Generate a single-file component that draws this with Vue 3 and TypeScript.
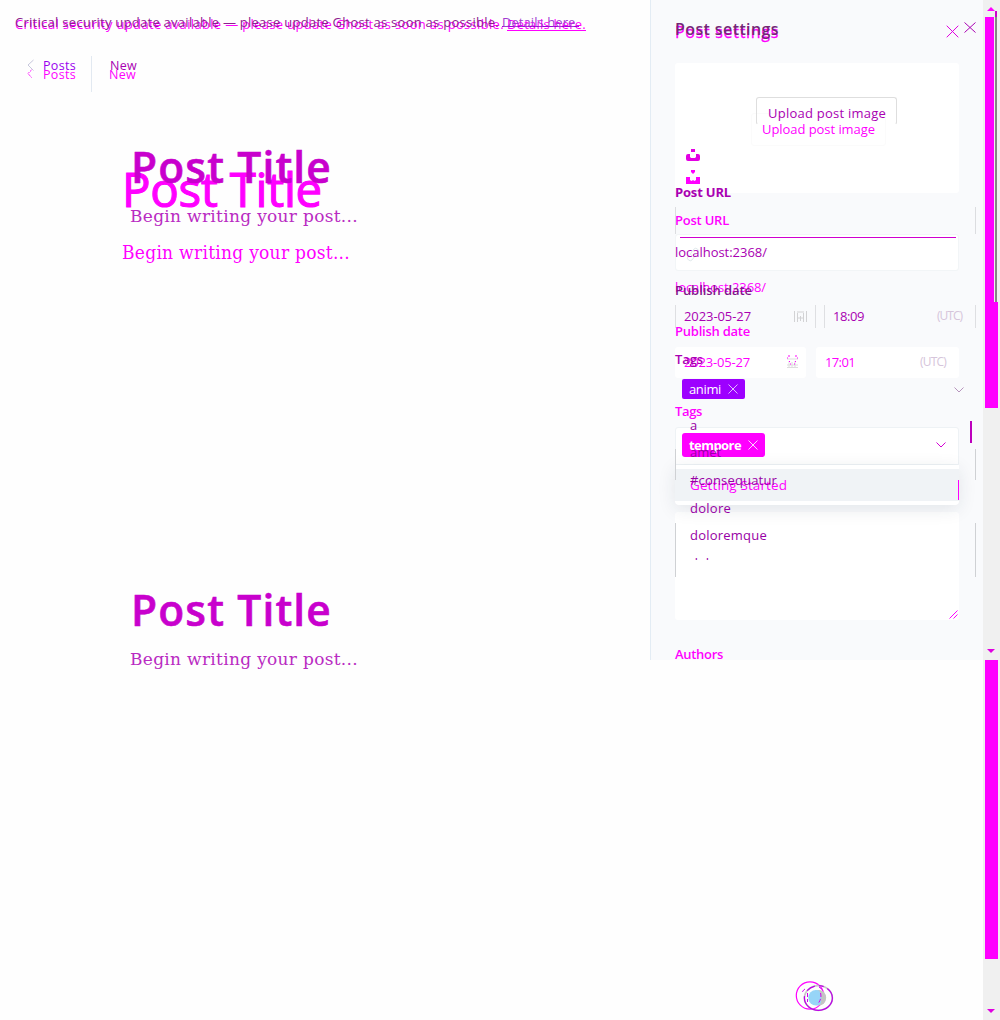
<script setup lang="ts">
import type { Directive } from 'vue'

// Spreads the letters of a line so that it spans the given width.
const vFit: Directive<HTMLElement, number> = {
  mounted(el, { value }) {
    const natural = el.getBoundingClientRect().width
    const count = (el.textContent ?? '').trim().length
    el.style.letterSpacing = `${((value - natural) / count).toFixed(3)}px`
  },
}

interface Option {
  name: string
  width: number
  gap: number
}
const options: Option[] = [
  { name: 'a', width: 8, gap: 0 },
  { name: 'amet', width: 31, gap: 7 },
  { name: '#consequatur', width: 87, gap: 8 },
  { name: 'dolore', width: 41, gap: 8 },
  { name: 'doloremque', width: 77, gap: 7 },
]
</script>

<template>
  <div class="page">
    <!-- Editor, current state -->
    <section class="editor now">
      <p class="notice"><span v-fit="489">Critical security update available — please update Ghost as soon as possible.</span><a v-fit="79">Details here.</a></p>
      <nav>
        <svg class="back" width="6" height="10" viewBox="0 0 6 10"><path d="M4.5 1 1 4.5 4.5 8.5" stroke-dasharray="2 1" /></svg>
        <span class="posts" v-fit="33">Posts</span>
        <span v-fit="27">New</span>
      </nav>
      <h1><span v-fit="200">Post Title</span></h1>
      <p class="body"><span v-fit="228">Begin writing your post...</span></p>
    </section>

    <!-- Editor, previous state -->
    <section class="editor old">
      <p class="notice"><span v-fit="484">Critical security update available — please update Ghost as soon as possible.</span><a v-fit="77">Details here.</a></p>
      <nav>
        <svg class="back" width="8" height="13" viewBox="0 0 8 13"><path d="M6.5 1 1 6 6.5 11.5" /></svg>
        <span class="posts" v-fit="33">Posts</span>
        <i class="rule"></i>
        <span v-fit="27">New</span>
      </nav>
      <h1><span v-fit="201">Post Title</span></h1>
      <p class="body"><span v-fit="228">Begin writing your post...</span></p>
      <h1 class="again"><span v-fit="201">Post Title</span></h1>
      <p class="body"><span v-fit="228">Begin writing your post...</span></p>
    </section>

    <aside>
      <!-- Settings, current state -->
      <div class="settings now">
        <header><span v-fit="104">Post settings</span>
          <svg class="close" width="13" height="13" viewBox="0 0 13 13"><path d="M.7.7l11.6 11.6M12.3.7.7 12.3" /></svg>
        </header>
        <div class="upload">
          <div class="btn"><span v-fit="113">Upload post image</span></div>
          <svg class="splash" width="14" height="14" viewBox="0 0 14 14"><path d="M5 0h4v2L7 4 5 2zM0 7h4v3l1.500 1L7 10l1.500 1L10 10V7h4v7H0z" /></svg>
        </div>
        <div class="label url"><span v-fit="54">Post URL</span></div>
        <div class="field">
          <i class="line"></i>
          <svg width="15" height="15" viewBox="0 0 15 15"><path d="M6 9 5 8q-1-1 0-2l3-4q1.500-1.500 3.500 0t.5 3.500l-2 2M8 6l1 1q1 1 0 2l-3 4q-1.500 1.500-3.500 0T2 9.500l2-2" /></svg>
        </div>
        <div class="t local"><span v-fit="91">localhost:2368/</span></div>
        <div class="label pub"><span v-fit="75">Publish date</span></div>
        <div class="dates">
          <div class="date"><span v-fit="66">2023-05-27</span>
            <svg width="13" height="14" viewBox="0 0 13 14"><path class="pale" d="M1 4h11M1 12.500h11M3 6v6M6 7v5M9 6v6M1 10h11" /><path d="M2 1h2M9 1h2M1 3h1M11 3h1M3 6l1 1M9 7l1-1M4 9h1M8 9h1" /></svg>
          </div>
          <div class="date time"><span v-fit="30">17:01</span><small v-fit="26">(UTC)</small></div>
        </div>
        <div class="label tags"><span v-fit="27">Tags</span></div>
        <div class="select">
          <div class="chip"><b v-fit="52">tempore</b><svg width="10" height="10" viewBox="0 0 10 10"><path d="M.5.5l9 9M9.500.5l-9 9" /></svg></div>
          <svg class="down" width="10" height="6" viewBox="0 0 10 6"><path d="M.5.5 5 5 9.500.5" /></svg>
        </div>
        <div class="menu"><div class="item"><span v-fit="97">Getting Started</span><i></i></div></div>
        <div class="area">
          <svg width="9" height="9" viewBox="0 0 9 9"><path d="M.5 8.500l8-8M4.500 8.500l4-4" /></svg>
        </div>
        <div class="label authors"><span v-fit="48">Authors</span></div>
      </div>

      <!-- Settings, previous state -->
      <div class="settings old">
        <header><span v-fit="104">Post settings</span>
          <svg class="close" width="12" height="11" viewBox="0 0 12 11"><path d="M.5.5l11 10M11.500.5l-11 10" /></svg>
        </header>
        <div class="btn"><span v-fit="118">Upload post image</span></div>
        <svg class="splash" width="14" height="12" viewBox="0 0 14 12"><path d="M5 0h4v3H5zM2 5h2v3l1 1h4l1-1V5h2q2 0 2 2v3q0 2-2 2H2q-2 0-2-2V7q0-2 2-2z" /></svg>
        <div class="label url"><span v-fit="56">Post URL</span></div>
        <div class="sides"></div>
        <div class="t local"><span v-fit="92">localhost:2368/</span></div>
        <div class="label pub"><span v-fit="77">Publish date</span></div>
        <div class="dates">
          <div class="date"><span v-fit="67">2023-05-27</span>
            <svg width="13" height="11" viewBox="0 0 13 11"><path d="M.5 0v11M3.500 2v9M6.500 5v5M9.500 2v9M12.500 0v11M3 1h7M3 7h7" /></svg>
          </div>
          <div class="date time"><span v-fit="31">18:09</span><small v-fit="25">(UTC)</small></div>
        </div>
        <div class="label tags"><span v-fit="28">Tags</span></div>
        <div class="select">
          <div class="chip"><span v-fit="32">animi</span><svg width="10" height="10" viewBox="0 0 10 10"><path d="M.5.5l9 9M9.500.5l-9 9" /></svg></div>
          <svg class="down" width="10" height="6" viewBox="0 0 10 6"><path d="M.5.5 5 5 9.500.5" /></svg>
        </div>
        <div class="options">
          <div v-for="o in options" :key="o.name" class="t" :style="{ marginTop: `${o.gap}px` }"><span v-fit="o.width">{{ o.name }}</span></div>
          <div class="t cut"><span>dolor</span></div>
          <i class="edge one"></i><i class="edge two"></i><i class="bar"></i>
        </div>
      </div>
    </aside>

    <div class="track">
      <i class="up"></i>
      <i class="thumb first"></i>
      <i class="thumb second"></i>
      <i class="dn mid"></i>
      <i class="thumb third"></i>
      <i class="dn end"></i>
      <i class="slim"></i>
    </div>

    <svg class="rings" width="40" height="32" viewBox="0 0 40 32" fill="none">
      <circle cx="15" cy="15.500" r="13.700" stroke="#f0f" stroke-width="1.200" />
      <circle cx="23.500" cy="17.700" r="7.700" fill="#c4c4c4" />
      <circle cx="21" cy="17.700" r="7.700" fill="#97d5f7" />
      <path d="M24 10.300a7.700 7.700 0 0 1 1 15q3-7-1-15z" fill="#c4c4c4" />
      <ellipse cx="23.400" cy="18" rx="14" ry="12.300" stroke="#c9c9c9" stroke-width="1.700" />
      <ellipse cx="23.400" cy="18" rx="14" ry="12.300" stroke="#bd00e8" stroke-width="1.200" stroke-dasharray="43 6 9 4 5 4" />
      <path d="M10 9q-2 1-3 4M12.500 13v9M25.500 13q1.500 5-2 10M24 7l4 3" stroke="#d600f0" stroke-dasharray="4 2" />
    </svg>
  </div>
</template>

<style>
body {
  margin: 0;
  background: #fff;
}
</style>

<style scoped>
.page {
  display: grid;
  grid-template-columns: 650px 333px 17px;
  width: 1000px;
  height: 1020px;
  overflow: hidden;
  position: relative;
  background: #fefefe;
  font: 13px/20px 'Open Sans', 'Noto Sans', sans-serif;
  white-space: nowrap;
}
p,
h1 {
  margin: 0;
  font-weight: 400;
}
svg {
  display: block;
  fill: none;
  stroke: currentColor;
  flex: none;
}
span,
a,
b,
small {
  display: inline-block;
}
.now {
  color: #f0f;
}
.old {
  color: #a900b2;
}

/* Editor */
.editor {
  grid-area: 1 / 1;
}
.notice {
  display: flex;
  padding: 14px 0 0 15px;
}
.now .notice a {
  margin-left: 3px;
  border-bottom: 1px solid #f0f;
  height: 16px;
}
.old .notice {
  padding-top: 12px;
  color: #8d208d;
}
.old .notice a {
  margin-left: 3px;
  height: 14px;
  line-height: 20px;
  color: #a23ad0;
  border-bottom: 1px solid #9c00d6;
}
nav {
  display: flex;
  align-items: flex-start;
  font-size: 12.500px;
  height: 40px;
}
.now nav {
  margin-top: 31px;
  padding-left: 27px;
}
.now .back {
  margin-top: 4px;
}
.now .posts {
  margin: 0 33px 0 10px;
}
.old nav {
  margin-top: 24px;
  padding-left: 27px;
}
.old .back {
  margin-top: 3px;
  color: #c7c7dc;
}
.old .posts {
  margin: 0 0 0 8px;
  color: #9a00ee;
}
.rule {
  width: 1px;
  height: 36px;
  background: #e2e9f1;
  margin: 0 18px 0 15px;
}
h1 {
  padding-left: 122px;
  line-height: 60px;
}
.now h1 {
  font-size: 47.500px;
  -webkit-text-stroke: 1.1px #f0f;
  margin-top: 54px;
}
.old h1 {
  padding-left: 131px;
  font-size: 42.500px;
  font-weight: 600;
  -webkit-text-stroke: 0.6px #c800cd;
  margin-top: 41px;
  color: #c800cd;
}
.old h1.again {
  margin-top: 352px;
}
.body {
  font: 19px/24px 'DejaVu Serif Condensed', 'DejaVu Serif', serif;
  font-stretch: condensed;
  padding-left: 122px;
}
.now .body {
  margin-top: 21px;
}
.old .body {
  padding-left: 130px;
  font: 17px/24px 'DejaVu Serif', serif;
  margin-top: 7px;
  color: #b92bc2;
}

/* Settings panel */
aside {
  grid-area: 1 / 2;
  height: 660px;
  display: grid;
  overflow: hidden;
  background: #f9fafc;
  border-left: 1px solid #e3ecf4;
}
.settings {
  grid-area: 1 / 1;
  padding-left: 24px;
  width: 284px;
  display: flex;
  flex-direction: column;
}
.settings > * {
  flex: none;
}
.settings.old {
  width: 301px;
  position: relative;
  z-index: 2;
}
header {
  display: flex;
  justify-content: space-between;
  font-size: 16px;
  margin-top: 22px;
  height: 20px;
}
.now header span {
  -webkit-text-stroke: 0.3px #f0f;
}
.now .close {
  margin-top: 3px;
}
.old header {
  margin-top: 18px;
  font-weight: 600;
  color: #742775;
}
.old header span {
  position: relative;
  top: 1px;
}
.close {
  color: #e000e0;
}
.old .close {
  margin-top: 4px;
  color: #a900b2;
}
.upload {
  height: 130px;
  margin-top: 21px;
  background: #fff;
  border-radius: 3px;
}
.now .btn {
  margin: 50px 0 0 76px;
  padding-left: 10px;
  line-height: 31px;
  box-sizing: border-box;
  border-radius: 3px;
  border: 1px solid #fbfbfb;
  width: 135px;
  height: 33px;
}
.old .btn {
  margin: 59px 0 0 81px;
  width: 141px;
  height: 28px;
  padding: 5px 0 0 11px;
  box-sizing: border-box;
  border: 1px solid #dedede;
  border-bottom-color: transparent;
  border-radius: 3px;
}
.splash {
  margin-left: 11px;
  fill: currentColor;
  stroke: none;
}
.now .splash {
  margin-top: 24px;
}
.old .splash {
  margin-top: 24px;
  color: #e300e3;
}
.label {
  font-weight: 600;
}
.now .url {
  margin-top: 17px;
}
.old .url {
  margin-top: 21px;
  font-weight: 700;
}
.field {
  position: relative;
  box-sizing: border-box;
  height: 37px;
  margin-top: 4px;
  padding: 12px 0 0 10px;
  background: #fff;
  border: 1px solid #f2f5f7;
  border-radius: 3px;
  color: #dfe8eb;
}
.line {
  position: absolute;
  left: 4px;
  top: 2px;
  width: 276px;
  height: 1px;
  background: #cf00cf;
}
.now .local {
  margin-top: 6px;
}
.old .sides {
  height: 27px;
  margin-top: 5px;
  border: solid #dcdde0;
  border-width: 0 1px;
}
.old .local {
  margin-top: 8px;
}
.now .pub {
  margin-top: 24px;
}
.old .pub {
  margin-top: 18px;
  color: #84138b;
}
.dates {
  display: flex;
}
.date {
  box-sizing: border-box;
  display: flex;
  justify-content: space-between;
}
.now .dates {
  margin-top: 6px;
  gap: 10px;
}
.now .date {
  width: 131px;
  height: 31px;
  padding: 5px 7px 0 9px;
  border: 0;
  border-radius: 3px;
  background: #fff;
}
.now .date svg {
  margin-top: 3px;
}
.now .date .pale {
  stroke: #ddd;
}
.now .time {
  width: 143px;
  padding-right: 13px;
}
small {
  font-size: 12px;
  color: #d6c5db;
}
.old .dates {
  margin-top: 5px;
  gap: 8px;
}
.old .date {
  width: 141px;
  height: 23px;
  padding: 1px 8px 0 8px;
  border: solid #dedfe2;
  border-width: 0 1px;
}
.old .date svg {
  color: #d2d2d4;
  margin-top: 5px;
}
.old .time {
  width: 152px;
  padding-right: 13px;
}
.now .tags {
  margin-top: 23px;
}
.old .tags {
  margin-top: 21px;
}
.select {
  display: flex;
  justify-content: space-between;
}
.chip {
  display: flex;
  align-items: center;
  justify-content: space-between;
  box-sizing: border-box;
  padding: 0 7px;
  color: #fff;
  border-radius: 3px;
}
.now .select {
  height: 38px;
  margin-top: 6px;
  padding: 5px 12px 0 6px;
  box-sizing: border-box;
  background: #fff;
  border: 1px solid #eef2f5;
  border-radius: 3px 3px 0 0;
}
.now .chip {
  width: 83px;
  height: 24px;
  background: #f0f;
}
.now .chip svg {
  color: #ffd5ff;
}
.now .down {
  margin-top: 9px;
  color: #d400d4;
}
.old .select {
  margin-top: 10px;
  height: 20px;
  padding: 0 12px 0 7px;
}
.old .chip {
  width: 63px;
  height: 20px;
  background: #9d00ff;
  border-radius: 2px;
}
.old .chip svg {
  color: #e2baff;
}
.old .down {
  margin-top: 8px;
  color: #b795bd;
}
.menu {
  position: relative;
  z-index: 1;
  height: 40px;
  padding: 4px 0;
  box-sizing: border-box;
  background: #fff;
  border-radius: 0 0 4px 4px;
  box-shadow: 0 4px 18px rgba(25, 45, 70, 0.1);
}
.item {
  display: flex;
  justify-content: space-between;
  height: 32px;
  padding-left: 15px;
  line-height: 33px;
  font-size: 13.500px;
  background: #f0f3f6;
}
.item i {
  width: 1px;
  height: 20px;
  margin-top: 11px;
  background: #f0f;
}
.area {
  height: 108px;
  margin-top: 7px;
  box-sizing: border-box;
  padding: 98px 1px 0 0;
  display: flex;
  justify-content: flex-end;
  background: #fff;
  border-radius: 3px;
}
.authors {
  margin-top: 24px;
}
.options {
  position: relative;
  z-index: 2;
  margin-top: 16px;
  padding-left: 15px;
  color: #9800a5;
}
.old .cut {
  margin-top: 8px;
  height: 7px;
  overflow: hidden;
}
.edge {
  position: absolute;
  left: 0;
  right: 0;
  border: solid #cfd1d4;
  border-width: 0 1px;
}
.one {
  top: 34px;
  height: 31px;
}
.two {
  top: 108px;
  height: 54px;
}
.bar {
  position: absolute;
  right: 4px;
  top: 6px;
  width: 2px;
  height: 22px;
  background: #bd00bd;
}

/* Page scrollbar */
.track {
  grid-area: 1 / 3;
  position: relative;
  display: flex;
  flex-direction: column;
  padding-left: 2px;
  background: #f0f0f0;
}
.track i {
  flex: none;
}
.up,
.dn {
  margin-left: 2px;
  width: 0;
  border: solid transparent;
  border-width: 0 4.500px 4px;
  border-bottom-color: #f0f;
}
.up {
  margin-top: 7px;
}
.dn {
  border-width: 4px 4.500px 0;
  border-top-color: #e000e0;
}
.thumb {
  width: 13px;
  background: #f0f;
}
.first {
  width: 9px;
  height: 285px;
  margin-top: 6px;
}
.second {
  height: 106px;
}
.mid {
  margin-top: 241px;
}
.third {
  height: 299px;
  margin-top: 7px;
}
.end {
  margin-top: 50px;
}
.slim {
  position: absolute;
  left: 12px;
  top: 11px;
  width: 2px;
  height: 291px;
  background: linear-gradient(#cc00cc 0 6px, #858585 6px);
}
.rings {
  position: absolute;
  left: 795px;
  top: 980px;
  stroke: none;
}
</style>
